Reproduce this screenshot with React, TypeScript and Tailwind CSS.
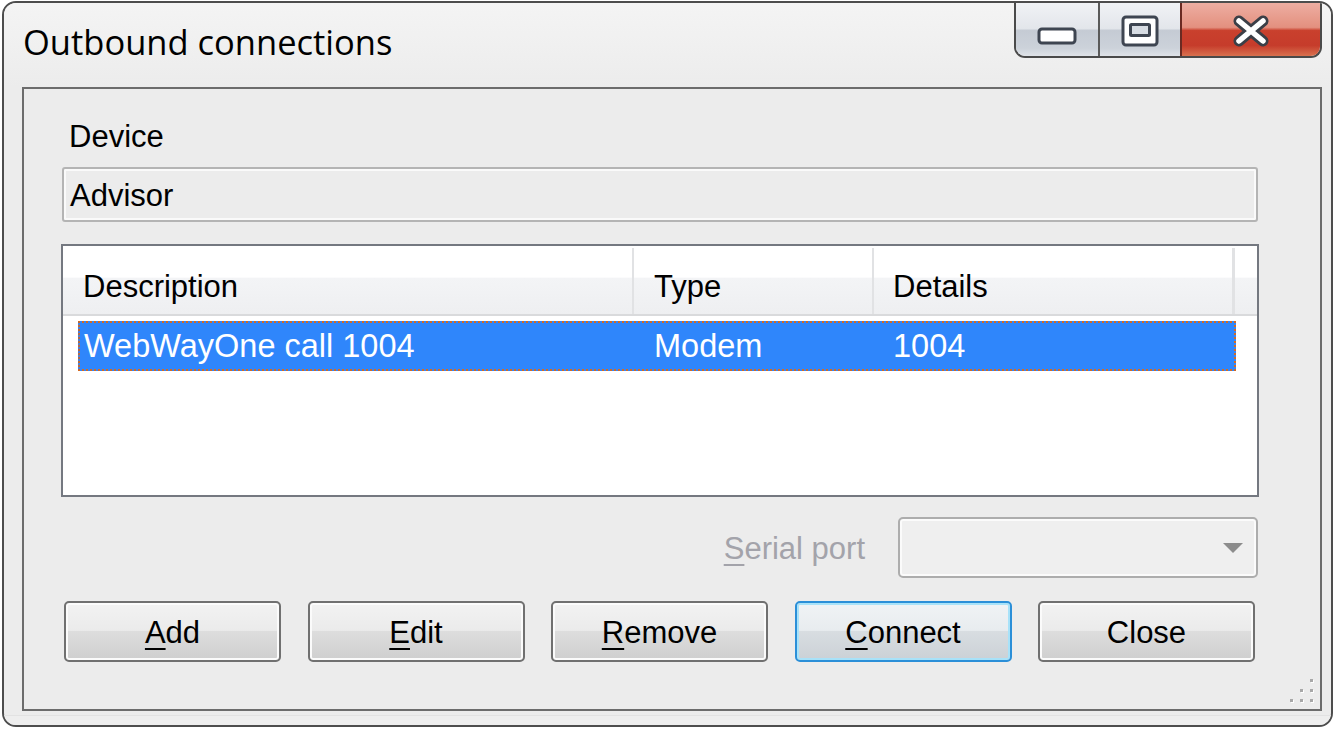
import React from 'react';

const Btn: React.FC<{ label: string; accel?: number; focused?: boolean }> = ({ label, accel, focused }) => {
  const hasKey = accel !== undefined && accel >= 0;
  return (
    <div
      className={
        focused
          ? "w-[217px] h-[61px] rounded-[5px] border-2 border-[#2b8fd8] shadow-[inset_0_0_0_2px_#a8e2f9] bg-[linear-gradient(to_bottom,#f0f3f5_0%,#e8ecef_48%,#d8dde1_50%,#cbd1d6_100%)] flex items-center justify-center"
          : "w-[217px] h-[61px] rounded-[5px] border-2 border-[#707070] shadow-[inset_0_0_0_2px_#fbfbfb] bg-[linear-gradient(to_bottom,#f2f2f2_0%,#ebebeb_48%,#dddddd_50%,#cfcfcf_100%)] flex items-center justify-center"
      }
    >
      <span className="pt-[3px] text-[31px] leading-[36px] text-black">
        {hasKey ? (
          <>
            {label.slice(0, accel)}
            <span className="underline underline-offset-[5px] decoration-[2px]">{label.charAt(accel!)}</span>
            {label.slice(accel! + 1)}
          </>
        ) : (
          label
        )}
      </span>
    </div>
  );
};

const App: React.FC = () => {
  return (
    <div className="w-[1341px] h-[730px] bg-white overflow-hidden font-['Liberation_Sans',Arial,sans-serif]">
      {/* window frame */}
      <div className="ml-[2px] mt-[1px] w-[1331px] h-[726px] rounded-[14px] border-2 border-[#4d4d4d] bg-[#ececec] flex flex-col overflow-hidden">
        {/* title bar */}
        <div className="h-[84px] shrink-0 flex items-start justify-between bg-[linear-gradient(to_bottom,#f4f4f4,#ececec)]">
          <div className="pl-[19px] pt-[19px] text-[34.5px] leading-[40px] text-black font-['Open_Sans','Noto_Sans',sans-serif]">
            Outbound connections
          </div>
          <div className="mr-[9px] h-[55px] flex rounded-b-[11px] border-2 border-t-0 border-[#4a4a4a] overflow-hidden">
            <div className="w-[82px] h-full flex items-end justify-center pb-[11px] bg-[linear-gradient(to_bottom,#f0f2f5_0%,#e3e6eb_48%,#c5cbd4_52%,#ccd2da_85%,#dfe3e8_100%)]">
              <svg width="40" height="18" viewBox="0 0 40 18">
                <rect x="2" y="2" width="36" height="14" rx="3" fill="#ffffff" stroke="#3e4551" strokeWidth="3" />
              </svg>
            </div>
            <div className="w-[82px] h-full flex items-start justify-center pt-[12px] border-l-2 border-[#5a5a5a] bg-[linear-gradient(to_bottom,#f0f2f5_0%,#e3e6eb_48%,#c5cbd4_52%,#ccd2da_85%,#dfe3e8_100%)]">
              <svg width="38" height="32" viewBox="0 0 38 32">
                <rect x="2" y="2" width="34" height="28" rx="3" fill="#ffffff" stroke="#3e4551" strokeWidth="3" />
                <rect x="9.5" y="9.5" width="19" height="11" rx="1" fill="#d7dce3" stroke="#3e4551" strokeWidth="3" />
              </svg>
            </div>
            <div className="w-[140px] h-full flex items-start justify-center pt-[12px] border-l-2 border-[#6a2a22] bg-[linear-gradient(to_bottom,#eeaea2_0%,#e3907f_46%,#c9402d_52%,#c63c2b_80%,#d8714f_100%)]">
              <svg width="38" height="32" viewBox="0 0 38 32">
                <path d="M7 6 L31 26 M31 6 L7 26" stroke="#3b3f47" strokeWidth="11" strokeLinecap="round" />
                <path d="M7 6 L31 26 M31 6 L7 26" stroke="#ffffff" strokeWidth="5.5" strokeLinecap="round" />
              </svg>
            </div>
          </div>
        </div>

        {/* client panel */}
        <div className="ml-[18px] w-[1300px] h-[624px] shrink-0 border-2 border-[#6c6c6c] relative">
          <div className="pl-[38px] flex flex-col">
            <div className="pt-[30px] pl-[7px] text-[31px] leading-[36px] text-black">Device</div>
            <div className="mt-[12px] w-[1196px] h-[55px] rounded-[3px] border-2 border-[#b4b4b4] shadow-[inset_0_0_0_2px_#fafafa] bg-[#ececec] pl-[6px] text-[31px] leading-[53px] text-black">
              Advisor
            </div>

            {/* list view */}
            <div className="mt-[22px] -ml-[1px] w-[1198px] h-[253px] border-2 border-[#747880] bg-white">
              <div className="h-[70px] pt-[2px] flex border-b-2 border-[#d9dadc]">
                <div className="h-full w-full flex bg-[linear-gradient(to_bottom,#ffffff_0%,#ffffff_44%,#f3f4f6_46%,#eeeff1_100%)]">
                  <div className="w-[571px] h-full border-r-2 border-[#e1e2e4] pl-[20px] pt-[21px] text-[31px] leading-[36px] text-black">
                    Description
                  </div>
                  <div className="w-[240px] h-full border-r-2 border-[#e1e2e4] pl-[20px] pt-[21px] text-[31px] leading-[36px] text-black">
                    Type
                  </div>
                  <div className="w-[361px] h-full border-r-[3px] border-[#e1e2e4] pl-[19px] pt-[21px] text-[31px] leading-[36px] text-black">
                    Details
                  </div>
                  <div className="flex-1" />
                </div>
              </div>
              <div className="mt-[5px] ml-[15px] w-[1158px] h-[50px] border-2 border-dotted border-[#d36a22] bg-[#2f86fb] flex items-center text-[32.5px] leading-[36px] text-white">
                <div className="w-[554px] pl-[4px]">WebWayOne call 1004</div>
                <div className="w-[240px] pl-[20px]">Modem</div>
                <div className="pl-[19px]">1004</div>
              </div>
            </div>

            {/* serial port */}
            <div className="mt-[20px] w-[1196px] h-[61px] flex items-center justify-end">
              <div className="pt-[3px] text-[31px] leading-[36px] text-[#a3a3aa] mr-[33px]">
                <span className="underline underline-offset-[5px] decoration-[2px]">S</span>erial port
              </div>
              <div className="w-[360px] h-[61px] rounded-[5px] border-2 border-[#adadad] shadow-[inset_0_0_0_2px_#fbfbfb] bg-[#efefef] flex items-center justify-end pr-[12px]">
                <svg width="22" height="12" viewBox="0 0 22 12">
                  <path d="M1 1 H21 L11 11 Z" fill="#8c8c8c" />
                </svg>
              </div>
            </div>

            {/* buttons */}
            <div className="mt-[23px] ml-[2px] flex gap-[26.5px]">
              <Btn label="Add" accel={0} />
              <Btn label="Edit" accel={0} />
              <Btn label="Remove" accel={0} />
              <Btn label="Connect" accel={0} focused />
              <Btn label="Close" />
            </div>
          </div>

          {/* size grip */}
          <svg className="absolute right-[4px] bottom-[4px]" width="26" height="26" viewBox="0 0 26 26">
            {[
              [20, 0], [20, 10], [20, 20], [10, 10], [10, 20], [0, 20],
            ].map(([x, y], i) => (
              <g key={i}>
                <rect x={x + 1} y={y + 1} width="3" height="3" fill="#ffffff" />
                <rect x={x} y={y} width="3" height="3" fill="#a8a8a8" />
              </g>
            ))}
          </svg>
        </div>
        <div className="flex-1 mt-[4px] border-t border-[#e2e2e2] bg-[#eeeeee]" />
      </div>
    </div>
  );
};

export default App;
